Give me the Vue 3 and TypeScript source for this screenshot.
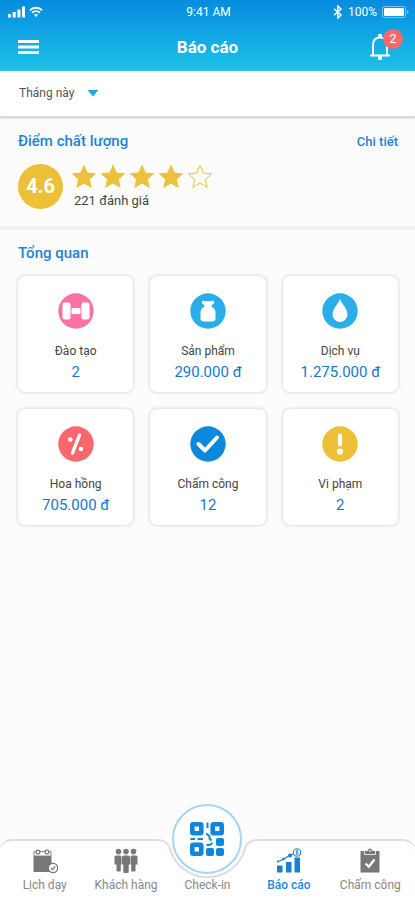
<script setup lang="ts">
import { ref } from 'vue'

type IconName = 'dumbbell' | 'jar' | 'drop' | 'percent' | 'check' | 'alert'

interface Stat {
  icon: IconName
  label: string
  value: string
}

const period = ref('month')
const score = 4.6
const stars = [true, true, true, true, false]

const stats: Stat[] = [
  { icon: 'dumbbell', label: 'Đào tạo', value: '2' },
  { icon: 'jar', label: 'Sản phẩm', value: '290.000 đ' },
  { icon: 'drop', label: 'Dịch vụ', value: '1.275.000 đ' },
  { icon: 'percent', label: 'Hoa hồng', value: '705.000 đ' },
  { icon: 'check', label: 'Chấm công', value: '12' },
  { icon: 'alert', label: 'Vi phạm', value: '2' },
]
</script>

<template>
  <div class="screen">
    <header class="top">
      <div class="status">
        <div class="status-side">
          <svg width="18" height="12" viewBox="0 0 18 12" fill="#fff">
            <rect x="0" y="8" width="3" height="3.5" rx=".6" />
            <rect x="4.7" y="6" width="3" height="5.500" rx=".6" />
            <rect x="9.400" y="3.500" width="3" height="8" rx=".6" />
            <rect x="14" y=".5" width="3" height="11" rx=".6" />
          </svg>
          <svg width="14" height="12" viewBox="0 0 14 12" fill="none" stroke="#fff" stroke-width="1.900">
            <path d="M.8 4.300C4.300.8 9.700.8 13.200 4.300" />
            <path d="M3.100 6.700C5.300 4.600 8.700 4.600 10.900 6.700" />
            <path d="M7 11 4.900 8.800Q7 7.200 9.100 8.800Z" fill="#fff" stroke="none" />
          </svg>
        </div>
        <span class="clock">9:41 AM</span>
        <div class="status-side end">
          <svg width="10" height="14" viewBox="0 0 10 14" fill="none" stroke="#fff" stroke-width="1.500">
            <path d="M1 3.700 8 10 4.800 13V1L8 4 1 10.300" />
          </svg>
          <span>100%</span>
          <svg class="battery" width="27" height="12" viewBox="0 0 27 12">
            <rect x=".5" y=".5" width="23" height="11" rx="2" fill="none" stroke="#fff" stroke-opacity=".45" />
            <rect x="2" y="2" width="20" height="8" rx="1" fill="#fff" />
            <path d="M25 4V8Q26.500 7.500 26.500 6T25 4Z" fill="#fff" fill-opacity=".5" />
          </svg>
        </div>
      </div>
      <div class="bar">
        <button class="icon-btn" type="button" aria-label="Menu">
          <svg width="21" height="16" viewBox="0 0 21 16" fill="#fff">
            <rect y="1" width="21" height="3" />
            <rect y="6.500" width="21" height="3" />
            <rect y="12" width="21" height="3" />
          </svg>
        </button>
        <h1>Báo cáo</h1>
        <button class="icon-btn bell" type="button" aria-label="Thông báo">
          <svg width="22" height="28" viewBox="0 0 22 28" fill="none" stroke="#fff" stroke-width="2">
            <path d="M1 22.500H21" />
            <path d="M4 22V12C4 7 7 4.500 11 4.500S18 7 18 12V22" />
            <path d="M11 1V5M11 23V27" stroke-width="3.600" />
          </svg>
          <span class="badge">2</span>
        </button>
      </div>
    </header>

    <div class="filter">
      <select v-model="period" aria-label="Thời gian">
        <option value="month">Tháng này</option>
      </select>
      <svg width="12" height="8" viewBox="0 0 12 8" fill="#1cabe2">
        <path d="M.5 1H11.500L6 7.500Z" />
      </svg>
    </div>

    <section class="quality">
      <div class="heading">
        <h2>Điểm chất lượng</h2>
        <a href="#">Chi tiết</a>
      </div>
      <div class="rating">
        <div class="score">{{ score }}</div>
        <div class="rating-info">
          <div class="stars">
            <svg v-for="(filled, i) in stars" :key="i" width="26" height="25" viewBox="0 0 26 25">
              <path
                d="M13 1.500 16.300 9 24.500 9.800 18.300 15.300 20.200 23.300 13 19.100 5.800 23.300 7.700 15.300 1.500 9.800 9.700 9Z"
                :fill="filled ? '#ecc23c' : '#fff'"
                stroke="#ecc23c"
                stroke-linejoin="round"
              />
            </svg>
          </div>
          <p>221 đánh giá</p>
        </div>
      </div>
    </section>

    <section class="overview">
      <h2>Tổng quan</h2>
      <div class="grid">
        <article v-for="s in stats" :key="s.label" class="card">
          <svg width="36" height="36" viewBox="0 0 36 36">
            <g v-if="s.icon === 'dumbbell'">
              <circle cx="18" cy="18" r="17.700" fill="#fb72a2" />
              <g fill="#fff">
                <rect x="4.500" y="9.500" width="8" height="17" rx="2" />
                <rect x="23.500" y="9.500" width="8" height="17" rx="2" />
                <rect x="13.500" y="15" width="9" height="6" rx="1" />
              </g>
            </g>
            <g v-else-if="s.icon === 'jar'">
              <circle cx="18" cy="18" r="17.700" fill="#29aeea" />
              <path
                d="M12.500 7.500 15 8.200H21L23.500 7.500 24.200 10 21.500 12.500V13.500Q25.500 15.500 25.500 19.500V25.500Q25.500 28.500 22.500 28.500H13.500Q10.500 28.500 10.500 25.500V19.500Q10.500 15.500 14.500 13.500V12.500L11.800 10Z"
                fill="#fff"
              />
            </g>
            <g v-else-if="s.icon === 'drop'">
              <circle cx="18" cy="18" r="17.700" fill="#29aeea" />
              <path d="M18 6C20 11 25.500 16 25.500 21.500A7.500 7.500 0 0 1 10.500 21.500C10.500 16 16 11 18 6Z" fill="#fff" />
            </g>
            <g v-else-if="s.icon === 'percent'">
              <circle cx="18" cy="18" r="17.700" fill="#fb676c" />
              <path d="M21.500 9 14.500 27" stroke="#fff" stroke-width="3.400" stroke-linecap="round" />
              <circle cx="12.300" cy="13.500" r="2.300" fill="#fff" />
              <circle cx="23" cy="23" r="2.300" fill="#fff" />
            </g>
            <g v-else-if="s.icon === 'check'">
              <circle cx="18" cy="18" r="17.700" fill="#0c88dc" />
              <path
                d="M8.500 18 15 24.500 27 11.500"
                fill="none"
                stroke="#fff"
                stroke-width="4"
                stroke-linecap="round"
                stroke-linejoin="round"
              />
            </g>
            <g v-else>
              <circle cx="18" cy="18" r="17.700" fill="#ecc037" />
              <path d="M18 9.500V18.500" stroke="#fff" stroke-width="4.200" stroke-linecap="round" />
              <circle cx="18" cy="25.500" r="3.100" fill="#fff" />
            </g>
          </svg>
          <span class="label">{{ s.label }}</span>
          <strong>{{ s.value }}</strong>
        </article>
      </div>
    </section>

    <nav class="tabs">
      <div class="shape">
        <div class="side left"></div>
        <svg width="103" height="61" viewBox="0 0 103 61">
          <path d="M0 0H1C9 0 12.500 4 14 10A39 39 0 0 0 89 10C90.500 4 94 0 102 0H103V61H0Z" fill="#fff" />
          <path d="M0 1H1C9 1 12.500 4 14 10A39 39 0 0 0 89 10C90.500 4 94 1 102 1H103" fill="none" stroke="#dedede" stroke-width="2" />
        </svg>
        <div class="side right"></div>
      </div>

      <a class="tab" href="#">
        <svg width="26" height="26" viewBox="0 0 26 26">
          <path d="M2 3.500H19V8H2Z" fill="none" stroke="#8a8a8a" stroke-width="1" />
          <rect x="1.500" y="8" width="18" height="16" rx="1" fill="#777" />
          <g fill="#fff" stroke="#777" stroke-width="1.200">
            <circle cx="6" cy="4" r="1.900" />
            <circle cx="15" cy="4" r="1.900" />
          </g>
          <circle cx="21" cy="20" r="4.600" fill="#fff" stroke="#777" stroke-width="1.300" />
          <path d="M19 20 20.600 21.600 23.200 18.400" fill="none" stroke="#777" stroke-width="1.200" />
        </svg>
        <span>Lịch dạy</span>
      </a>
      <a class="tab" href="#">
        <svg width="26" height="26" viewBox="0 0 26 26" fill="#777">
          <circle cx="5.500" cy="3.600" r="2.800" />
          <circle cx="13" cy="3.600" r="2.800" />
          <circle cx="20.500" cy="3.600" r="2.800" />
          <path d="M3 7.500H7.200Q8.500 7.500 8.500 9V16.500H7.800V22.500Q7.800 23.500 6.800 23.500H4.500Q3.500 23.500 3.500 22.500V16.500H1.500V9Q1.500 7.500 3 7.500Z" />
          <path d="M11 7.500H15Q17 7.500 17 9.500V16.500H15.700V23.500Q15.700 25 14.700 25H11.300Q10.300 25 10.300 23.500V16.500H9V9.500Q9 7.500 11 7.500Z" />
          <path d="M18.800 7.500H23Q24.500 7.500 24.500 9V16.500H22.500V22.500Q22.500 23.500 21.500 23.500H19.200Q18.200 23.500 18.200 22.500V16.500H17.500V9Q17.500 7.500 18.800 7.500Z" />
        </svg>
        <span>Khách hàng</span>
      </a>
      <a class="tab" href="#">
        <div class="scan">
          <svg width="36" height="36" viewBox="0 0 36 36">
            <g fill="#fff" stroke="#0f86dc" stroke-width="4.600">
              <rect x="3.300" y="3.300" width="9" height="9" rx="1" />
              <rect x="23.700" y="3.300" width="9" height="9" rx="1" />
              <rect x="3.300" y="23.700" width="9" height="9" rx="1" />
            </g>
            <g fill="#0f86dc">
              <rect x="27" y="17" width="8" height="8" rx="2" />
              <rect x="17" y="27" width="8" height="8" rx="2" />
              <rect x="27" y="27" width="8" height="8" rx="2" />
            </g>
            <path
              d="M18.500 1.500V7M1.500 18H6M8.500 18H14M17 12.500 20.500 15V17.500L22.500 19.500M17.500 24H20.500L23.500 22"
              fill="none"
              stroke="#0f86dc"
              stroke-width="2"
            />
          </svg>
        </div>
        <span>Check-in</span>
      </a>
      <a class="tab active" href="#">
        <svg width="26" height="26" viewBox="0 0 26 26" fill="#1580d8">
          <rect x="1" y="17.500" width="5.500" height="7" />
          <rect x="10" y="14" width="5.500" height="10.500" />
          <rect x="18.500" y="9.500" width="5.500" height="15" />
          <path d="M2 13.500 7 11.500 13.500 7.500 19 5.500" fill="none" stroke="#1580d8" stroke-width="1.300" />
          <circle cx="2" cy="13.500" r="1.100" />
          <circle cx="7.500" cy="11" r="1.300" />
          <circle cx="14" cy="7.500" r="2" />
          <circle cx="21" cy="4.500" r="3.700" fill="#fff" stroke="#1580d8" stroke-width="1.100" />
          <path d="M22.300 3Q19.700 2 19.900 3.700C20.100 4.900 22.200 4.200 22.200 5.500Q22 6.900 19.700 6M21 1.800V7.300" fill="none" stroke="#1580d8" stroke-width=".8" />
        </svg>
        <span>Báo cáo</span>
      </a>
      <a class="tab" href="#">
        <svg width="26" height="26" viewBox="0 0 26 26">
          <path d="M3.500 3H22.500V24.500H3.500Z" fill="#777" />
          <path d="M7.500 2.500H10.500Q11 0 13 0T15.500 2.500H18.500V6.500H7.500Z" fill="#777" stroke="#fff" stroke-width=".8" />
          <circle cx="13" cy="2.800" r=".9" fill="#fff" />
          <path d="M8.500 15.500 11.800 18.800 17.500 11.500" fill="none" stroke="#fff" stroke-width="2.300" />
        </svg>
        <span>Chấm công</span>
      </a>
    </nav>
  </div>
</template>

<style>
body {
  background: #fcfcfc;
}
</style>

<style scoped>
.screen {
  min-height: 100vh;
  display: flex;
  flex-direction: column;
  font-family: Roboto, 'Noto Sans', sans-serif;
  color: #444;
  background: #fcfcfc;
}
h1,
h2,
p {
  margin: 0;
}
a {
  text-decoration: none;
}
svg {
  display: block;
  flex: none;
}
.top {
  background: linear-gradient(#078bdf, #1cc3e8);
  color: #fff;
}
.status {
  display: flex;
  align-items: center;
  height: 23px;
  padding: 0 6px 0 8px;
  font-size: 12px;
}
.status-side {
  flex: 1;
  display: flex;
  align-items: center;
  gap: 3px;
}
.end {
  justify-content: flex-end;
  gap: 5px;
}
.bar {
  display: grid;
  grid-template-columns: 1fr auto 1fr;
  align-items: center;
  height: 48px;
  box-sizing: border-box;
  padding: 0 18px 1px;
}
h1 {
  font-size: 17px;
  line-height: 20px;
  font-weight: 700;
}
.icon-btn {
  position: relative;
  padding: 0;
  border: 0;
  background: none;
  justify-self: start;
}
.bell {
  justify-self: end;
  margin-right: 6px;
}
.badge {
  position: absolute;
  top: -4px;
  right: -12px;
  width: 20px;
  height: 20px;
  border-radius: 50%;
  background: #fb676c;
  color: #fff;
  font: 13px/20px Roboto, sans-serif;
  text-align: center;
}
.filter {
  display: flex;
  align-items: center;
  gap: 12px;
  height: 46px;
  box-sizing: border-box;
  padding: 0 19px 1px;
  background: #fff;
  border-bottom: 1px solid #dcdcdc;
  box-shadow: 0 1px 2px #c4c4c4;
}
select {
  appearance: none;
  padding: 0;
  border: 0;
  background: none;
  color: #555;
  font: 12px/16px Roboto, 'Noto Sans', sans-serif;
}
.quality {
  padding: 14px 17px 17px 18px;
  border-bottom: 4px solid #f0f0f0;
}
.heading {
  display: flex;
  justify-content: space-between;
  align-items: center;
  color: #1e83d6;
}
h2 {
  font-size: 15px;
  line-height: 20px;
  font-weight: 500;
  color: #1e83d6;
}
.heading a {
  color: #1e83d6;
  font-size: 13px;
  font-weight: 500;
}
.rating {
  display: flex;
  align-items: center;
  gap: 8px;
  margin-top: 13px;
}
.score {
  width: 45px;
  height: 45px;
  border-radius: 50%;
  background: #ecc037;
  color: #fff;
  font-size: 20px;
  line-height: 45px;
  font-weight: 700;
  text-align: center;
}
.stars {
  display: flex;
  gap: 3px;
}
.rating-info p {
  padding-left: 3px;
  margin-top: 4px;
  font-size: 13px;
  line-height: 16px;
}
.overview {
  padding: 13px 17px 24px 18px;
}
.grid {
  display: grid;
  grid-template-columns: repeat(3, 1fr);
  gap: 17px;
  margin-top: 13px;
}
.card {
  display: flex;
  flex-direction: column;
  align-items: center;
  padding: 17px 0 10px;
  border-radius: 7px;
  background: #fff;
  box-shadow: 0 0 3px 1px #dedede;
}
.label {
  margin-top: 14px;
  font-size: 12px;
  line-height: 16px;
}
.card strong {
  margin-top: 3px;
  font-size: 15px;
  line-height: 20px;
  font-weight: 400;
  color: #1577d0;
}
.tabs {
  position: relative;
  margin-top: auto;
  display: grid;
  grid-template-columns: repeat(5, 1fr);
  padding: 0 4px;
}
.shape {
  position: absolute;
  inset: 0;
  display: flex;
}
.side {
  flex: 1;
  box-sizing: border-box;
  border-top: 2px solid #dedede;
  background: #fff;
}
.left {
  border-top-left-radius: 12px;
}
.right {
  border-top-right-radius: 12px;
}
.tab {
  position: relative;
  display: flex;
  flex-direction: column;
  align-items: center;
  justify-content: flex-end;
  gap: 3px;
  height: 61px;
  box-sizing: border-box;
  padding-bottom: 7px;
  color: #888;
  font-size: 12px;
  line-height: 16px;
  white-space: nowrap;
}
.active {
  color: #1e88e0;
  font-weight: 500;
}
.scan {
  flex: none;
  display: flex;
  align-items: center;
  justify-content: center;
  width: 70px;
  height: 70px;
  box-sizing: border-box;
  border: 2px solid #a3d6f3;
  border-radius: 50%;
  background: #fff;
}
</style>
